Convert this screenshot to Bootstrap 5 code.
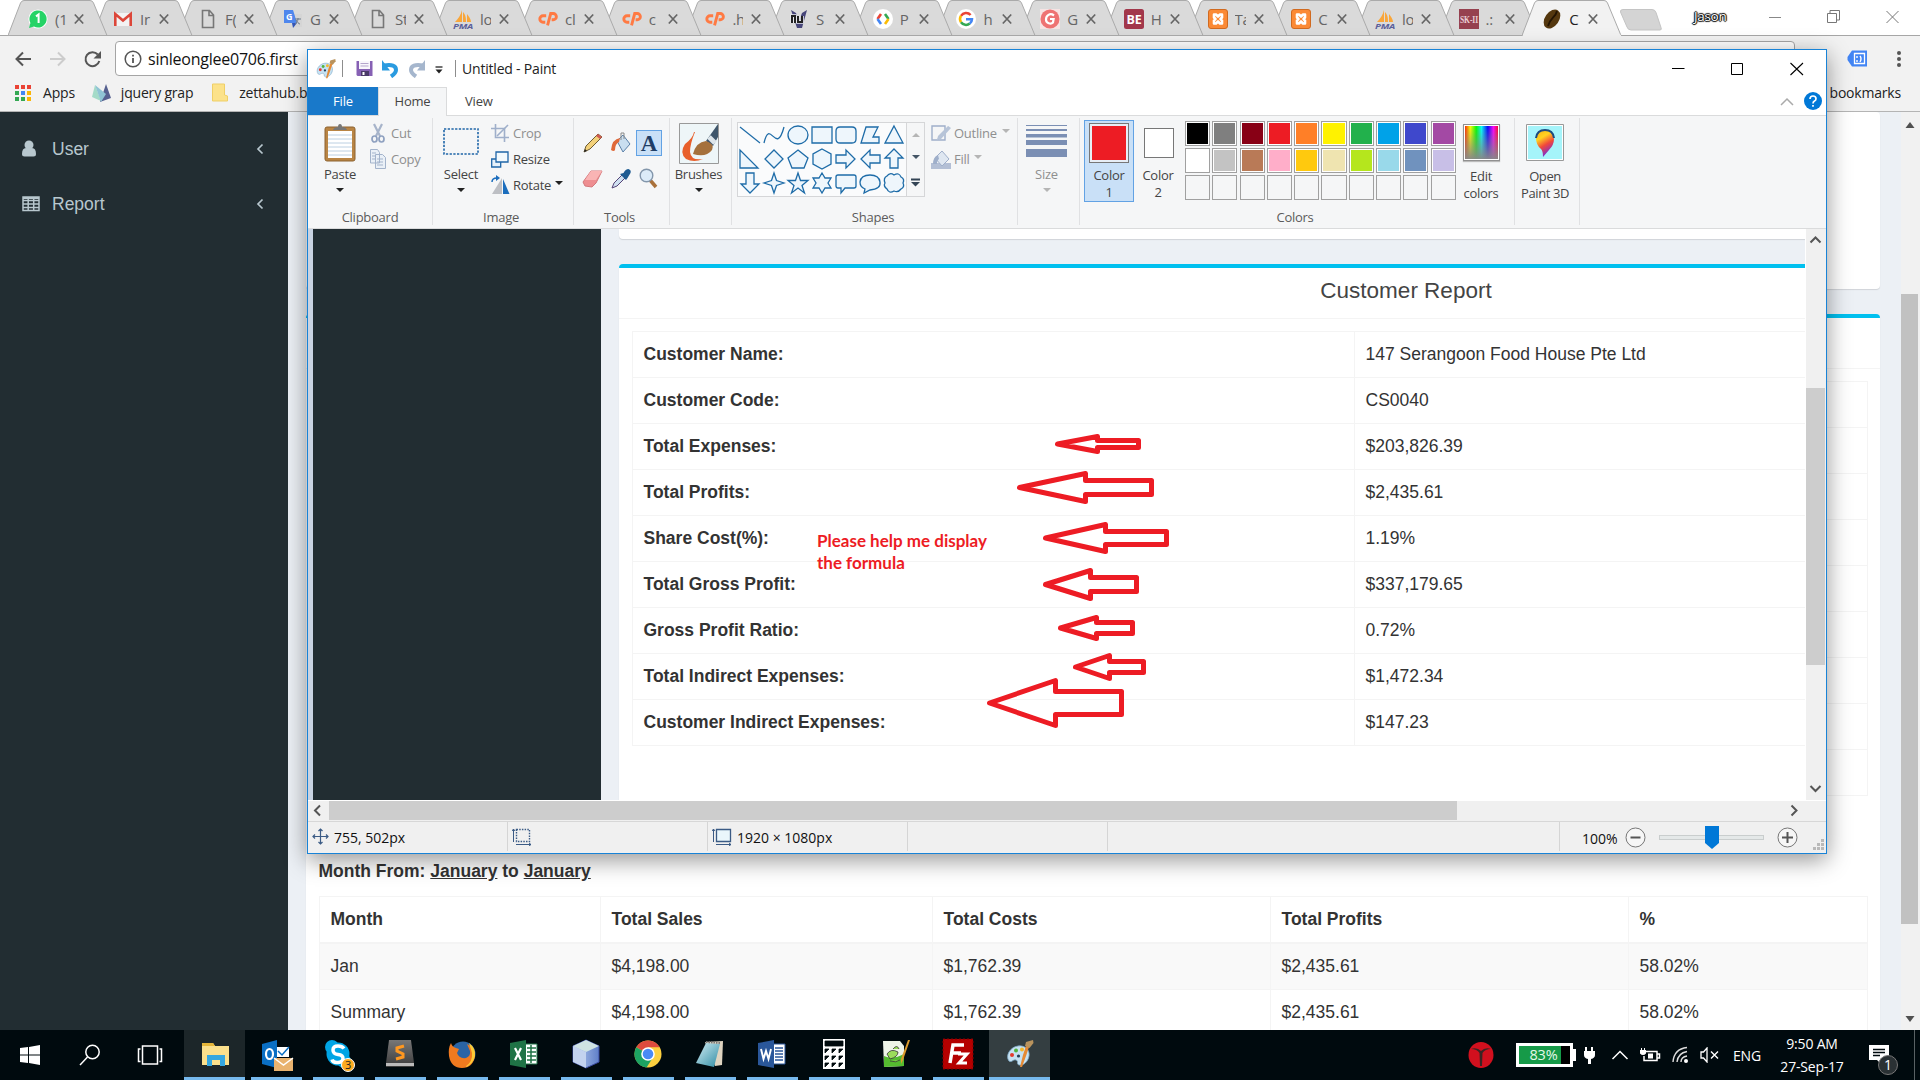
<!DOCTYPE html>
<html lang="en">
<head>
<meta charset="utf-8">
<title>Customer Report</title>
<link href="https://cdn.jsdelivr.net/npm/bootstrap@5.3.0/dist/css/bootstrap.min.css" rel="stylesheet">
<style>
body{width:1920px;height:1080px;overflow:hidden;background:#fff;font-family:"Open Sans","Noto Sans",sans-serif;font-size:14px;letter-spacing:-.2px;line-height:20px;color:#222}
svg{display:block;flex:none}
.desktop{width:1920px;height:1080px}
/* browser chrome */
.tab-strip{height:36px;padding-left:8px;border-bottom:1px solid #a6a6a6;background:#fff}
.tab-slot{width:83.7px;height:36px;flex:none}
.tab-slot.wide{width:85px}
.tab-shape{left:0;top:0}
.tab-inner{padding:9px 0 0 20px;height:35px}
.tab-title{width:11px;margin-left:7px;overflow:hidden;white-space:nowrap;font-size:15px;color:#666;height:20px}
.tab-slot.current .tab-title{color:#222}
.tab-x{margin-left:8px}
.new-tab{margin-left:13px;margin-top:9px}
.user-name{width:39px;margin-left:31px;margin-top:6px;font-size:13.5px;letter-spacing:-.3px;color:#fff;text-shadow:0 0 1px #000,1px 0 1px #000,-1px 0 1px #000,0 1px 1px #000,0 -1px 1px #000}
.browser-controls{margin-top:10px;margin-left:36px;gap:45px}
.toolbar{height:40px;background:#f2f2f2;padding-left:14px}
.toolbar>svg:nth-child(-n+3){margin-top:15px}
.address{height:35px;width:1680px;margin-top:5px;border:1px solid #a5a5a5;border-radius:4px;background:#fff;padding-left:8px;font-size:16px;letter-spacing:-.24px;color:#111}
.bookmarks{height:36px;background:#f2f2f2;border-bottom:1px solid #b4b4b4;padding:0 19px 2px 14px}
/* page */
.site{height:918px;background:#ecf0f5;font-family:"Liberation Sans",Arial,sans-serif;font-size:17.5px;letter-spacing:0;line-height:25px;color:#333}
.side-menu{width:288px;background:#222d32;color:#b8c7ce;padding-top:9px}
.side-menu a{height:55px;padding:0 24px 0 22px;color:#b8c7ce;text-decoration:none}
.side-menu span{margin-left:12px;margin-top:1px}
.site-main{width:1613px;padding:0 21px 0 18px}
.panel-box{background:#fff;border-radius:4px;box-shadow:0 1px 1px rgba(0,0,0,.12)}
.top-accent{border-top:4px solid #00c0ef}
.filter-box{height:177px;margin-bottom:25px}
.panel-title{height:51px;border-bottom:1px solid #f4f4f4;font-size:22.5px;color:#444;text-align:center;padding-top:10px}
.panel-content{padding:12px 12.5px}
.report-table{--bs-table-bg:transparent;border-color:#f4f4f4;color:#333;table-layout:fixed}
.report-table>:not(caption)>*>*{padding:10px 10px 10px 11px;line-height:25px;border-color:#f4f4f4;color:#333}
.report-table th{font-weight:700}
.monthly thead th{border-bottom-width:2px}
.monthly tbody tr.odd td{background:#f9f9f9}
.month-range{font-weight:700;margin:63px 0 12px}
.v-scroll{width:19px;background:#f1f1f1;padding:10px 0 8px}
.v-thumb{width:17px;height:630px;background:#c1c1c1;margin-top:166px}
/* Paint window */
.paint{left:307px;top:49px;width:1520px;height:805px;background:#fff;border:1px solid #1883d7;box-shadow:0 6px 22px rgba(0,0,0,.42);z-index:40}
.p-title{height:37px;padding-left:8px}
.vline{width:1px;background:#8d8d8d;height:17px}
.p-tabs{height:29px;border-bottom:1px solid #dadbdc;font-size:13px;color:#444;padding-right:3px}
.p-file{width:70px;height:28px;background:#1979ca;color:#fff}
.p-home{width:69px;height:29px;background:#f5f6f7;border:1px solid #dadbdc;border-bottom:0;padding-bottom:2px}
.ribbon{height:113px;background:#f5f6f7;border-bottom:1px solid #dadbdc;padding-top:2px;font-size:13px;letter-spacing:-.25px;line-height:17px;color:#444}
.rib{height:107px;border-right:1px solid #e0e1e3;flex:none}
.rib-body{height:91px;padding-top:2px}
.rib-name{text-align:center;color:#5b5b5b}
.off{color:#8f8f8f}
.w-clip{width:125px}.w-img{width:141px}.w-tool{width:96px}.w-brush{width:62px}.w-shape{width:286px}.w-size{width:62px}.w-col{width:435px}.w-3d{width:65px}
.big-btn{text-align:center}
.big-btn .cap{margin-top:7px}
.caret-d{width:0;height:0;border:4px solid transparent;border-top-color:#222;border-bottom:0;margin:5px auto 0}
.caret-s{width:0;height:0;border:4px solid transparent;border-top-color:#222;border-bottom:0;margin:-4px 0 0 3px}
.off .caret-s,.off .caret-d{border-top-color:#b5b5b5}
.tiny-row{height:26px;gap:4px}
.tool-a{width:26px;height:26px;background:#c9e0f7;border:1px solid #62a2e4;font:bold 23px/25px "Liberation Serif",serif;color:#1f3e66;text-align:center}
.shape-grid{width:170px;height:75px;border:1px solid #d5d6d8;background:#fafbfc;display:grid;grid-template-columns:repeat(7,24px);grid-auto-rows:24px}
.shape-grid svg{fill:#eef6fc;stroke:#1e6ca8;stroke-width:1.3}
.shape-scroll{width:18px;height:75px;border:1px solid #d5d6d8;border-left:0}
.c-pick{width:50px;height:82px;text-align:center;border:1px solid transparent}
.c-pick.chosen{background:#c9e0f7;border-color:#62a2e4}
.c-sw1{width:40px;height:40px;margin:2px auto 0;border:1px solid #777;background:#ed1c24;box-shadow:inset 0 0 0 2px #e7eef6}
.c-sw2{width:30px;height:30px;margin:7px auto 0;border:1px solid #777;background:#fff}
.swatches{width:271px;display:grid;grid-template-columns:repeat(10,25.2px);gap:2px 2.1px;grid-auto-rows:25px}
.swatches div{border:1px solid #a0a0a0;box-shadow:inset 0 0 0 1px #fff}
.swatches .empty{box-shadow:none}
.rainbow{width:37px;height:37px;border:1px solid #909090;box-shadow:inset 0 0 0 1px #fff,0 1px 1px #bbb;background:linear-gradient(transparent,#888),linear-gradient(90deg,red,#ff0 18%,#0f0 35%,#0ff 50%,#00f 68%,#f0f 84%,red);margin:auto}
.stage{height:571px}
.stage-pad{width:5px;background:#c9d3e2}
.picture{width:1492px;overflow:hidden;background:#ecf0f5;font-family:"Liberation Sans",Arial,sans-serif;font-size:17.5px;letter-spacing:0;line-height:25px;color:#333}
.pic-side{width:288px;background:#222d32;flex:none}
.pic-main{width:1574px;margin-left:18px;flex:none}
.pic-filter{height:10px;border-radius:0 0 4px 4px;margin-bottom:25px}
.pic-report{height:560px}
.red-note{left:504px;top:301px;width:220px;color:#ed1c24;font:bold 17px/22px Lato,sans-serif}
.ink{left:-313px;top:-229px;pointer-events:none}
.stage-scroll{width:20px;margin-left:1px;background:#f0f0f0;padding:7px 0 7px}
.stage-thumb{width:19px;height:277px;background:#cdcdcd}
.h-scroll{height:21px;background:#f0f0f0;border-top:1px solid #fff}
.h-thumb{width:1128px;height:19px;background:#cdcdcd}
.status{height:32px;background:#f0f0f0;border-top:1px solid #d7d7d7;color:#111;letter-spacing:0}
.status-cell{width:200px;height:29px;border-right:1px solid #d5d5d5;padding-left:4px;gap:5px;flex:none}
.status-cell span{padding-top:3px}
.zoom-track{width:105px;height:5px;background:#e4e8e8;border:1px solid #c9cdcd}
/* taskbar */
.taskbar{height:50px;background:#000a0e;color:#fff;z-index:50}
.task{width:62px;height:50px;padding:0 5.5px;flex:none}
.task .face{height:47px}
.task .run{height:3px;background:#76b9ed}
.task.files{width:61px;padding:0;background:#1c2629}
.task.front{padding:0;width:61px;background:#343e41}
.batt{width:57px;height:24px;border:3px solid #fff;background:linear-gradient(90deg,#169a48 82%,#000 82%);color:#e4f8e8;text-align:center;line-height:17px;font-size:14.5px;padding-right:2px}
.clock{width:76px;text-align:center;line-height:23px}
.badge-1{left:10px;top:10px;width:20px;height:20px;border-radius:50%;background:#2a3134;border:1px solid #777;text-align:center;line-height:18px}
</style>
<script src="https://cdn.jsdelivr.net/npm/bootstrap@5.3.0/dist/js/bootstrap.bundle.min.js"></script>
</head>
<body>
<svg width="0" height="0" class="position-absolute">
<defs>
<linearGradient id="cubeG" x1="0" x2="1"><stop offset="0" stop-color="#b9cdf0"/><stop offset="1" stop-color="#5f7fc8"/></linearGradient>
<linearGradient id="noteG" x1="0" y1="0" x2="1" y2="1"><stop offset="0" stop-color="#d4eef4"/><stop offset="1" stop-color="#2d8ba3"/></linearGradient>
<linearGradient id="subG" x1="0" y1="0" x2="0" y2="1"><stop offset="0" stop-color="#777"/><stop offset="1" stop-color="#3b3b3b"/></linearGradient>
<linearGradient id="dropG" x1="0" y1="0" x2=".4" y2="1"><stop offset="0" stop-color="#f7b21c"/><stop offset=".35" stop-color="#ffd21f"/><stop offset=".65" stop-color="#f2483a"/><stop offset="1" stop-color="#7d2bd0"/></linearGradient>
<symbol id="f-wa" viewBox="0 0 20 20"><circle cx="10" cy="10" r="9.6" fill="#fff"/><path d="M1 19l1.4-5A8.6 8.6 0 1 1 6 17.6z" fill="#25d366"/><path d="M8 7.4L10.6 5.500V14" fill="none" stroke="#fff" stroke-width="2"/></symbol>
<symbol id="f-gm" viewBox="0 0 20 20"><path d="M1 4h18v13H1z" fill="#f3f3f3"/><path d="M2.300 17V5l7.700 6.500L17.700 5v12" fill="none" stroke="#dc4639" stroke-width="2.600"/></symbol>
<symbol id="f-doc" viewBox="0 0 20 20"><path d="M4.500 1.500h7l4 4.500v12.500h-11zM11 1.500V6.500h4.500" fill="none" stroke="#777" stroke-width="1.600"/></symbol>
<symbol id="f-tr" viewBox="0 0 20 20"><path d="M8 5h11v13H11z" fill="#d5d5d5"/><path d="M1 1h9l4 13H1z" fill="#4f87ed"/><path d="M9 14h5l-4 5z" fill="#3355b5"/><path d="M12 10h6m-3-1v1c0 2-2 4-3 5m1-4c1 2 3 4 4 4" stroke="#6c7a8c" fill="none"/><text x="3" y="11" font-size="9" font-weight="700" fill="#fff">G</text></symbol>
<symbol id="f-pma" viewBox="0 0 20 20"><path d="M9 1v12H2c3-3 6-7 7-12zM10 3c3 3 3 7 3 10h-3zM14 5c2 3 4 5 4 8h-4z" fill="#f9a63a"/><text x="0" y="19.500" font-size="7.500" font-weight="700" font-style="italic" fill="#5b609a" textLength="20" lengthAdjust="spacingAndGlyphs">PMA</text></symbol>
<symbol id="f-cp" viewBox="0 0 22 20"><path d="M9 6.500H5.500a3.500 3.500 0 0 0 0 7H8M10.500 17L14 4h2.800a3.400 3.400 0 0 1 0 6.800H15" fill="none" stroke="#ff7a43" stroke-width="3.200"/></symbol>
<symbol id="f-nu" viewBox="0 0 20 20"><path d="M2 1l5 3 3 8 3-8 5-3-5 18H8z" fill="#47467a"/><path d="M3 14V7h3v7M9 7v6h4V7" stroke="#e8e8ee" stroke-width="3.600" fill="none"/><path d="M3 14V7h3v7M9 7v6h4V7" stroke="#222" stroke-width="2" fill="none"/></symbol>
<symbol id="f-gd" viewBox="0 0 20 20"><circle cx="10" cy="10" r="10" fill="#fff"/><path d="M8 5L4.500 10" stroke="#ea4335" stroke-width="2.600"/><path d="M4.500 10L8 15" stroke="#4285f4" stroke-width="2.600"/><path d="M12 5l3.500 5" stroke="#34a853" stroke-width="2.600"/><path d="M15.500 10L12 15" stroke="#fbbc05" stroke-width="2.600"/></symbol>
<symbol id="f-gg" viewBox="0 0 20 20"><circle cx="10" cy="10" r="10" fill="#fff"/><g fill="none" stroke-width="2.500"><path d="M14.600 6A6 6 0 0 0 5 6.800" stroke="#ea4335"/><path d="M5 6.800a6 6 0 0 0 0 6.500" stroke="#fbbc05"/><path d="M5 13.300a6 6 0 0 0 8.800 1.200" stroke="#34a853"/><path d="M13.800 14.500A5.500 5.500 0 0 0 16 10.200H10" stroke="#4285f4"/></g></symbol>
<symbol id="f-g2" viewBox="0 0 20 20"><path d="M0 0h20v20H0z" fill="#f6e3e3"/><circle cx="10" cy="10" r="9.500" fill="#ee7272"/><path d="M14 6.500c-4-3-8 0-8 4s5 5 7 3l.6-3.500H10" fill="none" stroke="#fff" stroke-width="2.200"/></symbol>
<symbol id="f-be" viewBox="0 0 20 20"><rect width="20" height="20" rx="2.500" fill="#a2374b"/><text x="2.500" y="15" font-size="13" font-weight="700" fill="#fff" textLength="15" lengthAdjust="spacingAndGlyphs">BE</text></symbol>
<symbol id="f-xa" viewBox="0 0 20 20"><rect x=".5" y=".5" width="19" height="19" rx="2.500" fill="#fb8a35" stroke="#d06a20"/><path d="M6 5.500h2l2 2 2-2h2v3L12.500 10l1.500 1.500v3h-2l-2-2-2 2H6v-3L7.500 10 6 8.500z" fill="none" stroke="#fff" stroke-width="2.600" stroke-linejoin="round"/></symbol>
<symbol id="f-sk" viewBox="0 0 20 20"><path d="M0 0h20v20H0z" fill="#96414f"/><text x="1" y="14" font-size="11" font-family="Liberation Serif" font-weight="700" fill="#e9cfd3" textLength="18" lengthAdjust="spacingAndGlyphs">SK-II</text></symbol>
<symbol id="f-cf" viewBox="0 0 20 20"><ellipse cx="10" cy="10" rx="7" ry="10.500" transform="rotate(35 10 10)" fill="#55380f"/><path d="M15 2c-1 6-7 7-9 15" stroke="#241402" stroke-width="1.800" fill="none"/></symbol>
<symbol id="palette" viewBox="0 0 28 28"><path d="M12 6c7-1 12 4 11 10s-6 10-10 9c-3-1 0-4-3-5s-4 3-7 1C-1 16 4 7 12 6z" fill="#c6e2f3" stroke="#7fa9c6" stroke-width=".8"/><circle cx="6" cy="15" r="2" fill="#e33c2f"/><circle cx="10" cy="10.500" r="2" fill="#53b440"/><circle cx="16" cy="9.500" r="2" fill="#f4b72c"/><circle cx="12.500" cy="16" r="1.600" fill="#25435c"/><path d="M14 27l3-12 3-9 3 1-3 9-4 11z" fill="#e58a35"/><path d="M19 6l1-4 7-2 .5 3-4 5z" fill="#b9935d"/></symbol>
</defs>
</svg>

<div class="desktop d-flex flex-column position-relative">
  <!-- browser tabs -->
  <div class="tab-strip d-flex position-relative">
    <div class="d-flex" id="tabs"></div>
    <svg class="new-tab" width="44" height="22"><path d="M4 .5h29q3 0 4 3l5 15q1 2.500-1 2.500H12q-3 0-4-3L1.500 3Q1 .5 4 .5z" fill="#d4d4d4" stroke="#c4c4c4"/></svg>
    <div class="user-name">Jason</div>
    <div class="browser-controls d-flex">
      <svg width="13" height="14"><path d="M0 7.500h12" stroke="#888"/></svg>
      <svg width="14" height="14"><path d="M.5 3.500h9v9h-9zM3 3V.5h9.500V10H10" fill="none" stroke="#777"/></svg>
      <svg width="14" height="14"><path d="M.5 1l12 12M12.500 1L.5 13" stroke="#777"/></svg>
    </div>
  </div>
  <div class="toolbar d-flex">
    <svg width="18" height="18" viewBox="0 0 18 18"><path d="M17 8H3M9 1.500L2.500 8 9 14.500" fill="none" stroke="#555" stroke-width="2"/></svg>
    <svg width="18" height="18" viewBox="0 0 18 18" style="margin-left:17px"><path d="M1 8h14M9 1.500L15.500 8 9 14.500" fill="none" stroke="#ccc" stroke-width="2"/></svg>
    <svg width="19" height="18" viewBox="0 0 19 18" style="margin-left:16px"><path d="M14.800 3.500A7 7 0 1 0 16.300 10" fill="none" stroke="#555" stroke-width="2"/><path d="M18 0v7.500h-7.500z" fill="#555"/></svg>
    <div class="address d-flex align-items-center" style="margin-left:13px">
      <svg width="18" height="18"><circle cx="9" cy="9" r="7.800" fill="none" stroke="#555" stroke-width="1.500"/><path d="M9 8v5M9 4.800v1.800" stroke="#555" stroke-width="1.800"/></svg>
      <span style="margin-left:6px">sinleonglee0706.first</span>
    </div>
    <svg width="22" height="18" style="margin-left:52px;margin-top:14px"><path d="M5 .5h15v16H5L.5 10V7z" fill="#4285f4"/><path d="M7.500 3.500h10v10h-10z" fill="none" stroke="#fff" stroke-width="1.300"/><path d="M10 6v2m0 2v2m3-6q2 2.500 0 6" stroke="#fff" stroke-width="1.400" fill="none"/></svg>
    <svg width="6" height="18" style="margin-left:27px;margin-top:14px" fill="#555"><circle cx="3" cy="3" r="2"/><circle cx="3" cy="9" r="2"/><circle cx="3" cy="15" r="2"/></svg>
  </div>
  <div class="bookmarks d-flex align-items-center">
    <svg width="18" height="18"><g><path d="M1 1h4v4H1zM7 1h4v4H7zM13 1h4v4h-4z" fill="#ea4335"/><path d="M1 7h4v4H1zM1 13h4v4H1zM7 13h4v4H7z" fill="#34a853"/><path d="M7 7h4v4H7z" fill="#4285f4"/><path d="M13 7h4v4h-4zM13 13h4v4h-4z" fill="#fbb505"/></g></svg>
    <span style="margin-left:11px">Apps</span>
    <svg width="19" height="18" style="margin-left:17px"><path d="M0 13L3 1l6 16z" fill="#a4dbc8"/><path d="M14 0l5 14-11 4z" fill="#56608f"/><path d="M3 1l11 9-5 8z" fill="#8fc4d4"/></svg>
    <span style="margin-left:10px">jquery grap</span>
    <svg width="16" height="19" style="margin-left:19px"><path d="M.5 1h12v11l3 1v5H.5z" fill="#fce28a" stroke="#efcf66"/></svg>
    <span style="margin-left:11px">zettahub.b</span>
    <span class="ms-auto">bookmarks</span>
  </div>

  <!-- web page under the window -->
  <div class="site d-flex overflow-hidden">
    <nav class="side-menu flex-shrink-0">
      <a class="d-flex align-items-center" href="#"><svg width="18" height="18"><circle cx="7" cy="5" r="4.500" fill="#b8c7ce"/><path d="M0 14q0-6 4-6 3 2 6 0 4 0 4 6 0 2.500-2.500 2.500h-9Q0 16.500 0 14z" fill="#b8c7ce"/></svg><span>User</span><svg class="ms-auto" width="8" height="12"><path d="M6.500 1.500L2 6l4.500 4.500" fill="none" stroke="#b8c7ce" stroke-width="1.700"/></svg></a>
      <a class="d-flex align-items-center" href="#"><svg width="18" height="16"><path d="M1 1h16v13.500H1zM1 4.500h16M1 8h16M1 11.500h16M6.200 3v11M11.700 3v11" fill="none" stroke="#b8c7ce" stroke-width="1.500"/><path d="M1 1h16v2H1z" fill="#b8c7ce"/></svg><span>Report</span><svg class="ms-auto" width="8" height="12"><path d="M6.500 1.500L2 6l4.500 4.500" fill="none" stroke="#b8c7ce" stroke-width="1.700"/></svg></a>
    </nav>
    <main class="site-main flex-shrink-0">
      <div class="panel-box filter-box"></div>
      <div class="panel-box top-accent">
        <div class="panel-title">Customer Report</div>
        <div class="panel-content">
          <table class="table table-bordered report-table mb-0" data-report></table>
          <p class="month-range">Month From: <u>January</u> to <u>January</u></p>
          <table class="table table-bordered report-table monthly mb-0">
            <colgroup><col style="width:281px"><col style="width:332px"><col style="width:338px"><col style="width:358px"><col></colgroup>
            <thead><tr><th>Month</th><th>Total Sales</th><th>Total Costs</th><th>Total Profits</th><th>%</th></tr></thead>
            <tbody>
              <tr class="odd"><td>Jan</td><td>$4,198.00</td><td>$1,762.39</td><td>$2,435.61</td><td>58.02%</td></tr>
              <tr><td>Summary</td><td>$4,198.00</td><td>$1,762.39</td><td>$2,435.61</td><td>58.02%</td></tr>
            </tbody>
          </table>
        </div>
      </div>
    </main>
    <div class="v-scroll d-flex flex-column">
      <svg width="18" height="6"><path d="M4.500 6l4.500-6 4.500 6z" fill="#505050"/></svg>
      <div class="v-thumb"></div>
      <svg class="mt-auto" width="18" height="6"><path d="M4.500 0h9L9 6z" fill="#505050"/></svg>
    </div>
  </div>

  <!-- taskbar -->
  <div class="taskbar d-flex">
    <div class="d-flex align-items-center" style="width:184px;padding-left:19px">
      <svg width="22" height="22"><path d="M1 4l8-1v7.500H1zM10 3l11-2v9.500H10zM1 11.500h8V19l-8-1zM10 11.500h11V21l-11-2z" fill="#fff"/></svg>
      <svg width="22" height="22" style="margin-left:38px"><circle cx="13.500" cy="8" r="6.700" fill="none" stroke="#fff" stroke-width="1.500"/><path d="M8.500 13L1 21" stroke="#fff" stroke-width="1.500"/></svg>
      <svg width="26" height="20" style="margin-left:36px"><path d="M5.500 1h15v18h-15zM3.500 4h-2v12.500h2M22.500 4h2v12.500h-2" fill="none" stroke="#fff" stroke-width="1.500"/></svg>
    </div>
    <div class="d-flex" id="tasks"></div>
    <div class="d-flex align-items-center ms-auto">
      <svg width="26" height="28"><ellipse cx="13" cy="14" rx="12.500" ry="13" fill="#d1101e"/><path d="M3 8q6 0 8.500 4L12 25h2l.5-13Q17 8 23 8q-6-2-10 2Q9 6 3 8z" fill="#3b2524"/></svg>
      <div class="d-flex align-items-center" style="margin-left:22px"><div class="batt">83%</div><svg width="3" height="12"><path d="M0 0h3v12H0z" fill="#fff"/></svg></div>
      <svg width="12" height="20" style="margin-left:7px"><path d="M2 2h2v4h4V2h2v4h2v4q0 3-4 4v5H5v-5q-4-1-4-4V6h1z" fill="#fff"/></svg>
      <svg width="18" height="12" style="margin-left:16px"><path d="M1.500 10L9 2.500l7.500 7.500" fill="none" stroke="#fff" stroke-width="1.500"/></svg>
      <svg width="22" height="15" style="margin-left:10px"><path d="M6 3.500h12v9H5V8M18.500 6h2v4h-2" fill="none" stroke="#fff" stroke-width="1.500"/><path d="M9 5.500h5v5H9zM1 2h6v3.500q-3 3-6 0zM2 0h1v2H2zM5 0h1v2H5z" fill="#fff"/></svg>
      <svg width="18" height="18" style="margin-left:11px"><g fill="none" stroke="#ddd" stroke-width="1.400"><path d="M1 16Q2 3 15 1.500M5 16q1-9 10-10.500M9 16q0-5 6-6"/></g><circle cx="14" cy="15" r="2" fill="#fff"/></svg>
      <svg width="20" height="16" style="margin-left:10px"><path d="M1 5h2.500L7 1v14l-3.500-4H1z" fill="none" stroke="#fff" stroke-width="1.300"/><path d="M11 4.500l7 7m0-7l-7 7" stroke="#fff" stroke-width="1.400"/></svg>
      <span style="margin-left:13px;width:30px;padding-top:1px">ENG</span>
      <div class="clock" style="margin-left:11px">9:50 AM<br>27-Sep-17</div>
      <div class="position-relative" style="margin-left:18px"><svg width="22" height="20"><path d="M1 0h20v15h-8v4l-4-4H1z" fill="#fff"/><path d="M5 4.500h12M5 7.500h12M5 10.500h7" stroke="#000a0e" stroke-width="1.300"/></svg><div class="badge-1 position-absolute">1</div></div>
      <div style="width:1px;height:50px;background:#596164;margin:0 5px 0 24px"></div>
    </div>
  </div>

  <!-- Paint -->
  <section class="paint position-absolute">
    <div class="p-title d-flex align-items-center">
      <svg width="20" height="20"><use href="#palette"/></svg>
      <div class="vline" style="margin:0 13px 0 6px"></div>
      <svg width="17" height="17"><path d="M.5 1h16v15h-15l-1-1z" fill="#8660b4"/><path d="M3 1h11v8H3z" fill="#f8f6fb"/><path d="M4.500 3.500h8M4.500 6h8" stroke="#b5a5cc"/><path d="M5 11h8v5H5z" fill="#4a3a68"/><path d="M6.500 12h2v3h-2z" fill="#fff"/></svg>
      <svg width="17" height="18" style="margin-left:9px"><path d="M2 5.500q12-2 12 4.500 0 3-5 6.500" fill="none" stroke="#2a9be0" stroke-width="4"/><path d="M0 0v10.500h8z" fill="#2a9be0"/></svg>
      <svg width="17" height="18" style="margin-left:9px"><path d="M15 5.500q-12-2-12 4.500 0 3 5 6.500" fill="none" stroke="#a5b6cd" stroke-width="4"/><path d="M17 0v10.500H9z" fill="#a5b6cd"/></svg>
      <svg width="8" height="8" style="margin-left:10px;margin-top:3px"><path d="M.5 1h7" stroke="#222" stroke-width="1.300"/><path d="M.5 3.500h7L4 7.500z" fill="#222"/></svg>
      <div class="vline" style="margin:0 6px 0 12px"></div>
      <span>Untitled - Paint</span>
      <div class="d-flex ms-auto" style="gap:46px;margin-right:22px">
        <svg width="13" height="14"><path d="M0 6.500h12.500" stroke="#000"/></svg>
        <svg width="13" height="14"><path d="M.5 1.500h11v11H.5z" fill="none" stroke="#000"/></svg>
        <svg width="14" height="14"><path d="M.5 1l12.500 12M13 1L.5 13" stroke="#000" stroke-width="1.100"/></svg>
      </div>
    </div>
    <div class="p-tabs d-flex">
      <div class="p-file d-flex align-items-center justify-content-center">File</div>
      <div class="p-home d-flex align-items-center justify-content-center">Home</div>
      <div class="d-flex align-items-center" style="margin-left:18px">View</div>
      <svg class="ms-auto align-self-center" width="14" height="9"><path d="M1 8l6-6 6 6" fill="none" stroke="#aaa" stroke-width="1.500"/></svg>
      <svg class="align-self-center" width="20" height="20" style="margin-left:9px"><circle cx="10" cy="10" r="9" fill="#0078d7"/><path d="M7 8q0-3 3-3t3 2.700q0 1.500-1.500 2.300T10 12.500M10 14v1.800" fill="none" stroke="#fff" stroke-width="1.700"/></svg>
    </div>
    <div class="ribbon d-flex">
      <div class="rib w-clip">
        <div class="rib-body d-flex" style="padding-left:16px">
          <div class="big-btn" style="padding-top:3px">
            <svg width="32" height="39" class="mx-auto"><rect x="1" y="4" width="30" height="34" rx="2" fill="#b98545" stroke="#8d6330"/><path d="M4 8h24v27H4z" fill="#fff"/><path d="M4 12h24M4 16h24M4 20h24M4 24h24M4 28h24M4 32h24" stroke="#bcd0e2"/><path d="M9 7q1-3 5-3 0-3 2-3t2 3q4 0 5 3z" fill="#777"/></svg>
            <div class="cap" style="margin-top:4px">Paste</div><div class="caret-d"></div>
          </div>
          <div class="off" style="margin-left:13px">
            <div class="tiny-row d-flex align-items-center"><svg width="18" height="20"><path d="M5 1l6 12M13 1L7 13" stroke="#a7b4ca" stroke-width="2.200"/><ellipse cx="5.500" cy="16" rx="2.500" ry="3" fill="none" stroke="#8fa1c0" stroke-width="1.700"/><ellipse cx="12.500" cy="16" rx="2.500" ry="3" fill="none" stroke="#8fa1c0" stroke-width="1.700"/></svg>Cut</div>
            <div class="tiny-row d-flex align-items-center"><svg width="18" height="20"><path d="M1.500.5h7l2 3V14h-9zM6.500 5.500h7l3 3v11h-10z" fill="#eaf0f7" stroke="#a3b3cb"/><path d="M3 4h4M3 7h3M3 10h3M8 10h6M8 13h6M8 16h6" stroke="#a3b3cb"/></svg>Copy</div>
          </div>
        </div>
        <div class="rib-name">Clipboard</div>
      </div>
      <div class="rib w-img">
        <div class="rib-body d-flex" style="padding-left:10px">
          <div class="big-btn" style="padding-top:8px">
            <svg width="36" height="27" class="mx-auto"><path d="M1 1h34v25H1z" fill="none" stroke="#1f66a8" stroke-width="1.600" stroke-dasharray="2.300 1.400"/></svg>
            <div class="cap" style="margin-top:11px">Select</div><div class="caret-d"></div>
          </div>
          <div style="margin-left:12px">
            <div class="tiny-row d-flex align-items-center off"><svg width="18" height="18"><path d="M4.500 0v13.500H18M0 4.500h13.500V18" fill="none" stroke="#9fafca" stroke-width="1.600"/><path d="M6 12L17 1" stroke="#9fafca" stroke-width="1.600"/></svg>Crop</div>
            <div class="tiny-row d-flex align-items-center"><svg width="18" height="17"><path d="M.7 8h9v8h-9z" fill="#e6f1fa" stroke="#1f66a8" stroke-width="1.300"/><path d="M5 1h12v10H5z" fill="#f2f9fd" stroke="#1f66a8" stroke-width="1.300"/></svg>Resize</div>
            <div class="tiny-row d-flex align-items-center"><svg width="19" height="20"><path d="M11 3v16L1 19z" fill="#bdbfc4"/><path d="M12 4l6.500 15H12z" fill="#1b6dbd"/><path d="M1 7q0-4 5-4" fill="none" stroke="#1b6dbd" stroke-width="1.500"/><path d="M5 0l4 3-4 3z" fill="#1b6dbd"/></svg><span style="margin-left:-1px">Rotate</span><i class="caret-s" style="margin-left:0"></i></div>
          </div>
        </div>
        <div class="rib-name" style="margin-right:4px">Image</div>
      </div>
      <div class="rib w-tool">
        <div class="rib-body" style="padding:12px 0 0 8px">
          <div class="d-flex align-items-center">
            <svg width="22" height="22"><path d="M2 20l2-6L16 2l4 3L8 17z" fill="#f3d17a" stroke="#6b5a33"/><path d="M2 20l1-3 2 2z" fill="#222"/><path d="M16 2l4 3-2 2-4-3z" fill="#cf5b52"/></svg>
            <svg width="22" height="22" style="margin-left:6px"><path d="M7 9l6-6 7 9-7 8z" fill="#c9def0" stroke="#5a80a8"/><path d="M10 6q-8 1-9 12 3 2 4 0 0-6 4-8z" fill="#e0693a"/><path d="M11 8V1h3v6" fill="none" stroke="#888"/></svg>
            <div class="tool-a" style="margin-left:4px">A</div>
          </div>
          <div class="d-flex align-items-center" style="margin-top:12px">
            <svg width="22" height="20"><path d="M1 13L9 2h11l-6 12-4 4-7-1z" fill="#ee8e91" stroke="#d4787c"/><path d="M9 2h11l-6 9H3z" fill="#f9b4b4"/></svg>
            <svg width="22" height="22" style="margin-left:6px"><path d="M2 20l2-5 8-8 3 3-8 8z" fill="#cfe0f0" stroke="#547"/><path d="M10 6l6 6 1.500-2 3-5q1-3-2-4-3 0-5 4z" fill="#1f5c92"/></svg>
            <svg width="20" height="22" style="margin-left:7px"><path d="M11 12l6 7" stroke="#a9713b" stroke-width="3.500"/><circle cx="7.500" cy="7.500" r="6.300" fill="#dcebf8" stroke="#8396ab" stroke-width="1.400"/></svg>
          </div>
        </div>
        <div class="rib-name" style="margin-right:4px">Tools</div>
      </div>
      <div class="rib w-brush">
        <div class="rib-body">
          <div class="big-btn" style="padding:3px 4px 0 0">
            <svg width="40" height="41" class="mx-auto"><path d="M.5.5h39v40H.5z" fill="#eef6f8" stroke="#999"/><path d="M15 9q-1 6-9 12-6 9 1 15 8 4 17 0-12 2-13-7 0-8 5-20" fill="#e8602c"/><path d="M39 1L27 18l7 5 5-9z" fill="#3f566b"/><path d="M30 14l6 6" stroke="#dde5ea" stroke-width="5"/><path d="M14 31q3-12 13-13 9 3 6 9-6 8-19 4z" fill="#a5713c"/></svg>
            <div class="cap" style="margin-top:2px">Brushes</div><div class="caret-d"></div>
          </div>
        </div>
      </div>
      <div class="rib w-shape">
        <div class="rib-body d-flex" style="padding:4px 0 0 5px">
          <div class="shape-grid" id="shapes"></div>
          <div class="shape-scroll d-flex flex-column align-items-center justify-content-around">
            <svg width="8" height="5"><path d="M0 5l4-4 4 4z" fill="#b5b5b5"/></svg><svg width="8" height="5"><path d="M0 0l4 4 4-4z" fill="#456"/></svg><svg width="9" height="9"><path d="M0 1.500h9" stroke="#345" stroke-width="2"/><path d="M0 4l4.500 4.500L9 4z" fill="#345"/></svg>
          </div>
          <div class="off" style="margin-left:6px;margin-top:-2px">
            <div class="tiny-row d-flex align-items-center"><svg width="20" height="18"><path d="M1 2h13v14H1zM7 15L18 3" fill="none" stroke="#9fafca" stroke-width="1.400"/><path d="M6 16l1-4L17 2l3 2L10 15z" fill="#b7c4d8"/></svg><span style="margin-left:-1px">Outline</span><i class="caret-s" style="margin-left:1px"></i></div>
            <div class="tiny-row d-flex align-items-center"><svg width="20" height="20"><path d="M0 14h20v6H0z" fill="#b3bfd5"/><path d="M4 9l7-7 7 8-7 7z" fill="#dfe7f1" stroke="#9fafca"/><path d="M7 6q-5 2-5 9h4q0-4 2-5z" fill="#9fafca"/></svg><span style="margin-left:-1px">Fill</span><i class="caret-s" style="margin-left:0"></i></div>
          </div>
        </div>
        <div class="rib-name" style="margin-right:3px">Shapes</div>
      </div>
      <div class="rib w-size">
        <div class="rib-body big-btn off" style="padding:7px 4px 0 0">
          <svg width="41" height="34" class="mx-auto" fill="#7b8fb4"><path d="M0 0h41v1H0zM0 4h41v2H0zM0 9h41v3.500H0zM0 15h41v5H0zM0 24h41v8H0z"/></svg>
          <div class="cap">Size</div><div class="caret-d"></div>
        </div>
      </div>
      <div class="rib w-col">
        <div class="rib-body d-flex" style="padding:2px 0 0 4px">
          <div class="c-pick chosen"><div class="c-sw1"></div><div class="cap" style="margin-top:4px">Color<br>1</div></div>
          <div class="c-pick"><div class="c-sw2"></div><div class="cap" style="margin:9px 2px 0 0">Color<br>2</div></div>
          <div class="swatches" id="swatches" style="margin-left:1px;margin-top:1px"></div>
          <div class="big-btn" style="margin-left:3px;padding-top:4px;width:44px"><div class="rainbow"></div><div class="cap" style="margin-top:7px">Edit<br>colors</div></div>
        </div>
        <div class="rib-name" style="margin-right:4px">Colors</div>
      </div>
      <div class="rib w-3d">
        <div class="rib-body big-btn" style="padding:6px 4px 0 0">
          <svg width="38" height="38" class="mx-auto"><path d="M.5.5h37v36H.5z" fill="#fff" stroke="#999"/><path d="M2 2h34v33H2z" fill="#a5f4fa"/><path d="M10 14q0-8 9-8 9 1 9 9 0 6-5 11l-6 7q0-6-2-8-5-4-5-11z" fill="url(#dropG)"/><path d="M10 14q1-8 9-8 8 0 9 8" fill="none" stroke="#1c4b80" stroke-width="2"/></svg>
          <div class="cap" style="margin-top:6px;letter-spacing:-.4px">Open<br>Paint 3D</div>
        </div>
      </div>
    </div>
    <div class="stage d-flex">
      <div class="stage-pad"></div>
      <div class="picture d-flex position-relative">
        <div class="pic-side"></div>
        <div class="pic-main">
          <div class="panel-box pic-filter"></div>
          <div class="panel-box top-accent pic-report">
            <div class="panel-title">Customer Report</div>
            <div class="panel-content"><table class="table table-bordered report-table mb-0" data-report></table></div>
          </div>
        </div>
        <div class="red-note position-absolute">Please help me display<br>the formula</div>
        <svg class="ink position-absolute" width="1810" height="800" id="ink" fill="none" stroke="#ed1c24" stroke-width="5" stroke-linejoin="round"></svg>
      </div>
      <div class="stage-scroll d-flex flex-column">
        <svg width="19" height="8"><path d="M4.500 6.500l5-5 5 5" fill="none" stroke="#555" stroke-width="2"/></svg>
        <div class="stage-thumb" style="margin-top:144px"></div>
        <svg width="19" height="8" class="mt-auto"><path d="M4.500 1l5 5 5-5" fill="none" stroke="#555" stroke-width="2"/></svg>
      </div>
    </div>
    <div class="h-scroll d-flex">
      <svg width="21" height="19"><path d="M12 4.500L7 9.500l5 5" fill="none" stroke="#555" stroke-width="2"/></svg>
      <div class="h-thumb"></div>
      <svg class="ms-auto" width="10" height="19" style="margin-right:26px"><path d="M1.500 4.500l5 5-5 5" fill="none" stroke="#555" stroke-width="2"/></svg>
    </div>
    <div class="status d-flex">
      <div class="status-cell d-flex align-items-center"><svg width="17" height="17"><path d="M8.500 1v15M1 8.500h15M6.500 3l2-2 2 2M6.500 14l2 2 2-2M3 6.500l-2 2 2 2M14 6.500l2 2-2 2" fill="none" stroke="#3b5b85" stroke-width="1.200"/></svg><span>755, 502px</span></div>
      <div class="status-cell d-flex align-items-center"><svg width="20" height="18"><path d="M4.500 1.500h13v12h-13z" fill="none" stroke="#3b5b85" stroke-width="1.400" stroke-dasharray="1.500 1.200"/><path d="M1.500 1v13M0 3l1.500-2L3 3M4 16.500h15M17 15l2 1.500-2 1.500" fill="none" stroke="#3b5b85"/></svg></div>
      <div class="status-cell d-flex align-items-center"><svg width="20" height="18"><path d="M4.500 1.500h14v12h-14z" fill="#eaf6fb" stroke="#3b5b85" stroke-width="1.300"/><path d="M1.500 1v13M0 3l1.500-2L3 3M4 16.500h15M17 15l2 1.500-2 1.500" fill="none" stroke="#3b5b85"/></svg><span>1920 × 1080px</span></div>
      <div class="status-cell"></div>
      <div class="status-cell" style="width:452px"></div>
      <div class="d-flex align-items-center" style="margin-left:22px">
        <span style="width:43px;padding-top:3px">100%</span>
        <svg width="21" height="21"><circle cx="10.500" cy="10.500" r="9.500" fill="#f6f6f6" stroke="#777"/><path d="M5.500 10.500h10" stroke="#555" stroke-width="2"/></svg>
        <div class="position-relative d-flex" style="margin-left:13px"><div class="zoom-track"></div><svg class="position-absolute" style="left:46px;top:-9px" width="14" height="23"><path d="M0 0h14v17l-7 6-7-6z" fill="#0078d7"/></svg></div>
        <svg width="21" height="21" style="margin-left:13px"><circle cx="10.500" cy="10.500" r="9.500" fill="#f6f6f6" stroke="#777"/><path d="M5 10.500h11M10.500 5v11" stroke="#555" stroke-width="2"/></svg>
      </div>
      <svg width="12" height="12" class="mt-auto ms-auto" style="margin:0 1px 2px 0" fill="#b9b9b9"><path d="M8 0h3v3H8zM4 4h3v3H4zM8 4h3v3H8zM0 8h3v3H0zM4 8h3v3H4zM8 8h3v3H8z"/></svg>
    </div>
  </section>
</div>

<script>
const el = id => document.getElementById(id);

const tabs = [['wa','(1'],['gm','Ir'],['doc','F('],['tr','G'],['doc','St'],['pma','lo'],['cp','cl'],['cp','c'],['cp','.h'],['nu','S'],['gd','P'],['gg','h'],['g2','G'],['be','H'],['xa','Ta'],['xa','C'],['pma','lo'],['sk','.:'],['cf','C']];
el('tabs').innerHTML = tabs.map(([icon, name], i) => {
  const on = i === tabs.length - 1;
  return `<div class="tab-slot position-relative ${on ? 'current' : ''} ${i < 6 ? 'wide' : ''}" style="z-index:${on ? 30 : 25 - i}">
    <svg class="tab-shape position-absolute" width="101" height="36"><path d="M0 35.500L12.500 3Q13.700.5 16 .5h66Q84.500.5 85.500 3L99 35.500${on ? 'V36H0z' : 'z'}" fill="${on ? '#f2f2f2' : '#dadada'}" stroke="#aaa"/>${on ? '<path d="M1 35.500h98" stroke="#f2f2f2" stroke-width="1.500"/>' : ''}</svg>
    <div class="tab-inner d-flex position-relative"><svg width="20" height="20"><use href="#f-${icon}"/></svg><span class="tab-title">${name}</span>
    <svg class="tab-x" width="10" height="20"><path d="M.8 5.500l8.400 9M9.200 5.500l-8.400 9" stroke="#666" stroke-width="1.700"/></svg></div></div>`;
}).join('');

const report = [['Customer Name:','147 Serangoon Food House Pte Ltd'],['Customer Code:','CS0040'],['Total Expenses:','$203,826.39'],['Total Profits:','$2,435.61'],['Share Cost(%):','1.19%'],['Total Gross Profit:','$337,179.65'],['Gross Profit Ratio:','0.72%'],['Total Indirect Expenses:','$1,472.34'],['Customer Indirect Expenses:','$147.23']];
document.querySelectorAll('[data-report]').forEach(t => {
  t.innerHTML = '<colgroup><col style="width:722px"><col></colgroup><tbody>' + report.map(r => `<tr><th>${r[0]}</th><td>${r[1]}</td></tr>`).join('') + '</tbody>';
});

// tip x, head right, shaft right, head top, head bottom, shaft top, shaft bottom (outer edges)
const arrows = [[1055,1100,1141,434,454,438,450],[1017,1088,1154,471,504,478,497],[1043,1108,1169,522,554,529,547],[1043,1093,1139,568,601,575,594],[1058,1099,1135,615,641,620,636],[1073,1112,1146,653,681,659,675],[987,1058,1124,678,728,689,717]];
el('ink').innerHTML = arrows.map(([x, h, r, t, b, s, e]) =>
  `<path d="M${x + 2.5} ${(t + b) / 2}L${h - 2.5} ${t + 2.5}V${s + 2.5}H${r - 2.5}V${e - 2.5}H${h - 2.5}V${b - 2.5}z"/>`).join('');

const colours = ['#000','#7f7f7f','#880015','#ed1c24','#ff7f27','#fff200','#22b14c','#00a2e8','#3f48cc','#a349a4','#fff','#c3c3c3','#b97a57','#ffaec9','#ffc90e','#efe4b0','#b5e61d','#99d9ea','#7092be','#c8bfe7'];
el('swatches').innerHTML = colours.map(c => `<div style="background:${c}"></div>`).join('') + '<div class="empty"></div>'.repeat(10);

const shapes = ['M2 4l20 16','M2 20C8-6 14 34 22 4','M2 12a10 9 0 1 0 20 0a10 9 0 1 0-20 0z','M2 4h20v16H2z','M6 4h12q4 0 4 4v8q0 4-4 4H6q-4 0-4-4V8q0-4 4-4z','M8 4h12l-5 10h6v6H3z','M12 3l9 17H3z',
'M2 3v18h18z','M12 3l9 9-9 9-9-9z','M12 3l10 8-4 10H6L2 11z','M12 2l9 5v10l-9 5-9-5V7z','M2 8h10V3l9 9-9 9v-5H2z','M22 8H12V3l-9 9 9 9v-5h10z','M12 2l9 9h-5v10H8V11H3z',
'M8 2h8v11h5l-9 9-9-9h5z','M12 2l2.500 7.500L22 12l-7.500 2.500L12 22l-2.500-7.500L2 12l7.500-2.500z','M12 2l2.500 7.500H22l-6 5 2.500 7.500-6.500-5-6.500 5L8 14.500l-6-5h7.500z','M12 2l3 5h6l-3 5 3 5h-6l-3 5-3-5H3l3-5-3-5h6z','M4 4h16q2 0 2 2v9q0 2-2 2h-9l-4 5v-5H4q-2 0-2-2V6q0-2 2-2z','M7 18q-5-2-5-7Q3 4 12 4t10 7-10 8l-6 3z','M5 5q3-4 7-1 5-3 7 2 4 2 2 6 2 4-2 6-3 4-7 2-5 3-7-2-4-3-2-6-2-5 2-7z'];
el('shapes').innerHTML = shapes.map(d => `<svg width="24" height="24" viewBox="0 0 24 24"><path d="${d}" ${d.endsWith('z') ? '' : 'fill="none"'}/></svg>`).join('');

const apps = {
files:'<path d="M1 3h11l2 3h14v19H1z" fill="#fbe08c"/><path d="M1 3h11l2 3H1z" fill="#e5b63a"/><path d="M6 26V15h18v11h-5v-6h-8v6z" fill="#35a7e0"/>',
outlook:'<path d="M0 4l15-4v28L0 24z" fill="#0a6fc4"/><path d="M15 7h12v10H15z" fill="#fff"/><path d="M16 11l4 4 7-8" fill="none" stroke="#0a6fc4" stroke-width="1.500"/><ellipse cx="7.500" cy="14" rx="3.500" ry="5" fill="none" stroke="#fff" stroke-width="2.200"/><path d="M12 18h19v13H12z" fill="#e9b36f"/><path d="M12 18l9.500 7 9.500-7" fill="none" stroke="#fff" stroke-width="1.500"/>',
skype:'<circle cx="14" cy="14" r="11.500" fill="#00a5e5"/><circle cx="8" cy="7" r="7" fill="#00a5e5"/><circle cx="20" cy="21" r="7" fill="#00a5e5"/><path d="M20 8.500Q18 6 14 6q-5 0-5 4t5 4.500 5 4-5 4-6-3" fill="none" stroke="#fff" stroke-width="3.500"/><circle cx="24" cy="25" r="6.500" fill="#fdaa1e" stroke="#fff"/><text x="21" y="29" font-size="11" fill="#222">3</text>',
sublime:'<path d="M3 0h22l3 23v4H0v-4z" fill="url(#subG)"/><path d="M0 23h28v3H0z" fill="#bbb"/><path d="M18 6l-7 2v3l6 3v3l-7 2" fill="none" stroke="#ff9820" stroke-width="3"/>',
firefox:'<circle cx="15" cy="14" r="12.500" fill="#2a64a5"/><path d="M3 3q1 4 5 5l3 1-2 4q2 6 9 5 5-2 4-7l-3-7q8 3 8 12-2 12-13 12T1 16Q0 8 3 3z" fill="#f07a1f"/><path d="M21 3q7 5 6 13-2 9-10 11 8-5 7-14z" fill="#fcca36"/>',
excel:'<path d="M14 4h13v20H14z" fill="#fff" stroke="#1f7346"/><path d="M17 8h9M17 12h9M17 16h9M17 20h9M21 5v18" stroke="#1f7346" stroke-width="1.500"/><path d="M0 3l16-3v28L0 25z" fill="#1f7346"/><path d="M5 8l6 12m0-12L5 20" stroke="#fff" stroke-width="2.200"/>',
cube:'<path d="M14 0l13 6v16l-13 6-13-6V6z" fill="url(#cubeG)" stroke="#3a4aa0"/><path d="M14 0l13 6-13 6L1 6z" fill="#cfe3e3"/><path d="M14 12v16L1 22V6z" fill="#c3d3ef"/>',
chrome:'<circle cx="14" cy="14" r="13.500" fill="#fcd03f"/><path d="M14 14L2.300 7.200A13.500 13.500 0 0 1 25.700 7.200H14z" fill="#dd4b3e"/><path d="M14 14L2.300 7.200A13.500 13.500 0 0 0 12.500 27.500L18 19z" fill="#1da362"/><circle cx="14" cy="14" r="6.800" fill="#fff"/><circle cx="14" cy="14" r="5.300" fill="#4a8af4"/>',
notes:'<path d="M9 2l18-1-1 24-7 1z" fill="#ded4c0"/><path d="M10 3l14 1-6 23L0 23z" fill="url(#noteG)"/><path d="M10 2l15 1" stroke="#777" stroke-width="2" stroke-dasharray="1.500 1"/>',
word:'<path d="M14 4h13v20H14z" fill="#fff" stroke="#2a579a"/><path d="M17 8h8M17 11h8M17 14h8M17 17h8M17 20h8" stroke="#2a579a" stroke-width="1.500"/><path d="M0 3l16-3v28L0 25z" fill="#2a579a"/><path d="M3 9l2.500 10L8 11l2.500 8L13 9" stroke="#fff" stroke-width="1.900" fill="none"/>',
calc:'<path d="M3-1h22v30H3z" fill="#fff"/><path d="M5 1h18v5H5zM5 9h4l-4 4zM12 9h4l-4 4zM19 9h4l-4 4zM5 16h4l-4 4zM12 16h4l-4 4zM19 16h4l-4 4zM5 23h4l-4 4zM12 23h4l-4 4zM19 23h4l-4 4z" fill="#000a0e" stroke="#000a0e" stroke-width=".8"/>',
npp:'<path d="M1 1h17l4 5v20L2 27z" fill="#eef4e8"/><path d="M2 16q9 4 20-2v12L2 27z" fill="#55bb30"/><path d="M5 14q4-6 11-2 0 5-8 7zM11 9q4-5 6 0M8 21q6 2 10-1" fill="#9bdc5b" stroke="#333" stroke-width=".8"/><path d="M28 0l-7 20-2 4v-5L26 0z" fill="#dc9b2d"/>',
fz:'<rect x="-1" y="-1" width="30" height="30" fill="#b50000" stroke="#7e0000" stroke-dasharray="2 2"/><path d="M6 23L9 5h11M8 13h9" fill="none" stroke="#fff" stroke-width="3.500"/><path d="M14 14h9l-8 9h8" fill="none" stroke="#fff" stroke-width="3"/>',
paint:'<use href="#palette" width="28" height="28"/>'};
el('tasks').innerHTML = Object.entries(apps).map(([k, g]) =>
  `<div class="task ${k === 'files' ? 'files' : ''} ${k === 'paint' ? 'front' : ''}"><div class="face d-flex align-items-center justify-content-center"><svg width="28" height="28" overflow="visible">${g}</svg></div><div class="run"></div></div>`).join('');
</script>
</body>
</html>
